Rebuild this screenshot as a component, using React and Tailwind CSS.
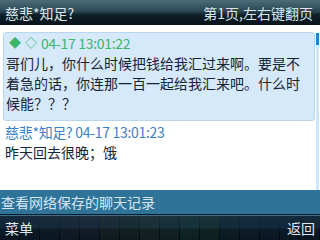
import React from "react";

const stripes = [
  "#1a2c3e", "#1c2e40", "#20303e", "#2a3040", "#2c3442", "#30383a", "#2e3c36", "#30423a",
  "#2c4440", "#264a40", "#224438", "#1e3a40", "#1c3444", "#1a3046", "#1a2e44", "#1c2c40",
];

export default function App() {
  return (
    <div
      className="w-[320px] h-[240px] flex flex-col overflow-hidden bg-white"
      style={{ fontFamily: '"Noto Sans CJK SC", "Noto Sans", sans-serif' }}
    >
      {/* Header */}
      <div className="h-[25px] flex items-center justify-between px-[5px] bg-[linear-gradient(to_bottom,#4d6c7a_0%,#2a4654_45%,#0e2029_60%,#07131a_100%)] text-[#dbe6ec] text-[14px] leading-none">
        <span>慈悲*知足?</span>
        <span className="pr-[2px]">第1页,左右键翻页</span>
      </div>

      {/* Content */}
      <div className="flex-1 flex bg-white">
        <div className="flex-1 pl-[3px] pt-[7px]">
          <div className="w-[312px] rounded-[3px] border border-[#b9d6ee] bg-[#d5e9fb] pl-[1px] pb-[7px] text-[14px] leading-[20px] text-[#152436]">
            <div className="h-[20px] flex items-center gap-[4px] pl-[4px] text-[#3cb46c]">
              <span className="text-[12px]">◆</span>
              <span className="text-[12px]">◇</span>
              <span className="tracking-[-0.3px]">04-17 13:01:22</span>
            </div>
            <div className="pl-[1px] w-[300px]">
              哥们儿，你什么时候把钱给我汇过来啊。要是不着急的话，你连那一百一起给我汇来吧。什么时候能？？？
            </div>
          </div>
          <div className="pl-[2px] pt-[1px] text-[14px] leading-[20px]">
            <div className="text-[#3b7fc6] tracking-[-0.3px]">慈悲*知足? 04-17 13:01:23</div>
            <div className="text-[#152436]">昨天回去很晚；饿</div>
          </div>
        </div>
        <div className="w-[5px] flex flex-col pt-[8px] pl-[1px]">
          <div className="w-[3px] flex-1 flex flex-col bg-[#cfe6f8]">
            <div className="h-[12px] bg-[#2a82c8]" />
          </div>
        </div>
      </div>

      {/* Band */}
      <div className="h-[24px] flex items-center pl-[1px] bg-[#2f7399] text-[#d6e7f1] text-[14px] leading-none">
        查看网络保存的聊天记录
      </div>
      <div className="h-[1px] bg-[#0b1a24]" />
      <div className="h-[1px] bg-[#3a6d8a]" />

      {/* Soft keys */}
      <div className="relative h-[24px] flex items-center justify-between px-[5px] bg-[linear-gradient(to_bottom,#132a3c_0%,#0f2434_50%,#04101a_55%,#020a10_100%)] text-[#dfeaf0] text-[14px] leading-none">
        <svg className="absolute inset-0" width="320" height="24" aria-hidden="true">
          {stripes.map((c, i) => (
            <rect key={i} x={i * 20} y="0" width="19" height="24" fill={c} opacity="0.35" />
          ))}
        </svg>
        <span className="relative">菜单</span>
        <span className="relative">返回</span>
      </div>
    </div>
  );
}
